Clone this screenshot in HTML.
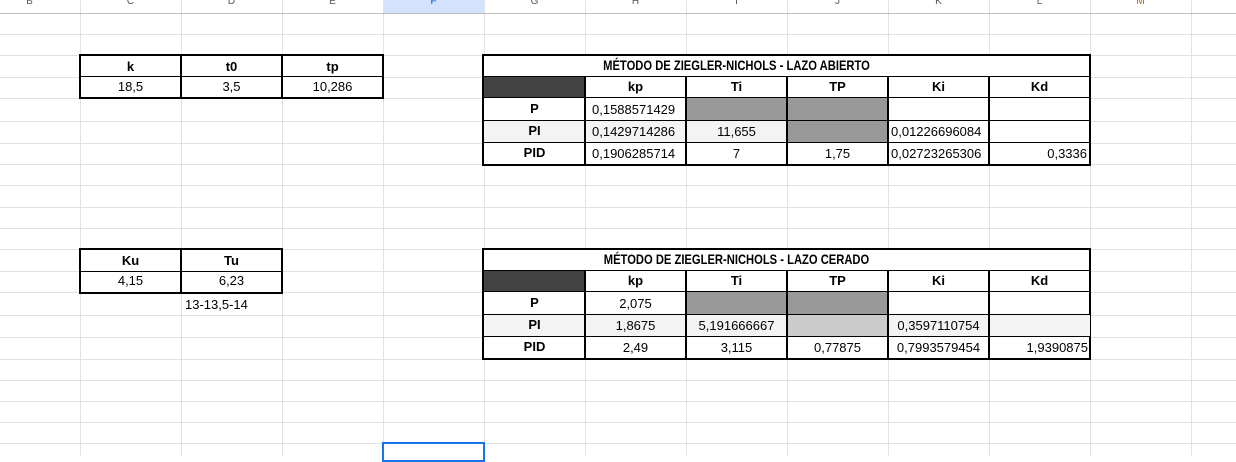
<!DOCTYPE html>
<html><head><meta charset="utf-8"><style>
body{margin:0;width:1236px;height:456px;overflow:hidden;background:#fff;position:relative;font-family:"Liberation Sans",Arial,sans-serif}
div{position:absolute;box-sizing:border-box}
.v{top:0;width:1px;height:456px;background:#e2e2e2}
.h{left:0;width:1236px;height:1px;background:#e2e2e2}
.cl{top:-5px;height:13px;font-size:10px;color:#555;text-align:center;line-height:13px}
.t{font-size:13px;color:#000;text-align:center;white-space:nowrap;overflow:visible}
.b{font-weight:bold}
.k{background:#000}
.ti{font-size:14px;font-weight:bold;transform:scaleX(0.8);transform-origin:center}
</style></head><body>
<div style="left:383px;top:0;width:101px;height:13px;background:#d3e3fd"></div>
<div class="v" style="left:80px"></div><div class="v" style="left:181px"></div><div class="v" style="left:282px"></div><div class="v" style="left:383px"></div><div class="v" style="left:484px"></div><div class="v" style="left:585px"></div><div class="v" style="left:686px"></div><div class="v" style="left:787px"></div><div class="v" style="left:888px"></div><div class="v" style="left:989px"></div><div class="v" style="left:1090px"></div><div class="v" style="left:1191px"></div>
<div class="h" style="top:34px"></div><div class="h" style="top:55px"></div><div class="h" style="top:77px"></div><div class="h" style="top:98px"></div><div class="h" style="top:121px"></div><div class="h" style="top:143px"></div><div class="h" style="top:164px"></div><div class="h" style="top:185px"></div><div class="h" style="top:207px"></div><div class="h" style="top:228px"></div><div class="h" style="top:249px"></div><div class="h" style="top:271px"></div><div class="h" style="top:292px"></div><div class="h" style="top:315px"></div><div class="h" style="top:337px"></div><div class="h" style="top:359px"></div><div class="h" style="top:380px"></div><div class="h" style="top:401px"></div><div class="h" style="top:422px"></div><div class="h" style="top:443px"></div>
<div style="left:0;top:13px;width:1236px;height:1px;background:#c0c0c0"></div>
<div class="cl" style="left:-21px;width:101px">B</div><div class="cl" style="left:80px;width:101px">C</div><div class="cl" style="left:181px;width:101px">D</div><div class="cl" style="left:282px;width:101px">E</div><div class="cl" style="left:383px;width:101px;color:#0b57d0">F</div><div class="cl" style="left:484px;width:101px">G</div><div class="cl" style="left:585px;width:101px">H</div><div class="cl" style="left:686px;width:101px">I</div><div class="cl" style="left:787px;width:101px">J</div><div class="cl" style="left:888px;width:101px">K</div><div class="cl" style="left:989px;width:101px">L</div><div class="cl" style="left:1090px;width:101px;color:#b06000">M</div>

<!-- table k t0 tp -->
<div style="left:79px;top:54px;width:305px;height:45px;background:#fff;border:2px solid #000"></div>
<div class="k" style="left:80px;top:76px;width:303px;height:1px"></div>
<div class="k" style="left:180px;top:55px;width:2px;height:43px"></div>
<div class="k" style="left:281px;top:55px;width:2px;height:43px"></div>
<div class="t b" style="left:80px;top:58px;width:101px;line-height:18px">k</div>
<div class="t b" style="left:181px;top:58px;width:101px;line-height:18px">t0</div>
<div class="t b" style="left:282px;top:58px;width:101px;line-height:18px">tp</div>
<div class="t" style="left:80px;top:78px;width:101px;line-height:18px">18,5</div>
<div class="t" style="left:181px;top:78px;width:101px;line-height:18px">3,5</div>
<div class="t" style="left:282px;top:78px;width:101px;line-height:18px">10,286</div>

<!-- table Ku Tu -->
<div style="left:79px;top:248px;width:204px;height:46px;background:#fff;border:2px solid #000"></div>
<div class="k" style="left:80px;top:271px;width:202px;height:1px"></div>
<div class="k" style="left:180px;top:249px;width:2px;height:44px"></div>
<div class="t b" style="left:80px;top:252px;width:101px;line-height:18px">Ku</div>
<div class="t b" style="left:181px;top:252px;width:101px;line-height:18px">Tu</div>
<div class="t" style="left:80px;top:272px;width:101px;line-height:18px">4,15</div>
<div class="t" style="left:181px;top:272px;width:101px;line-height:18px">6,23</div>
<div class="t" style="left:185px;top:296px;line-height:18px;text-align:left">13-13,5-14</div>

<!-- big table 1 -->
<div style="left:482px;top:54px;width:609px;height:112px;background:#fff;border:2px solid #000"></div>
<div style="left:484px;top:77px;width:101px;height:21px;background:#434343"></div>
<div style="left:484px;top:121px;width:303px;height:22px;background:#f3f3f3"></div>
<div style="left:686px;top:98px;width:202px;height:23px;background:#999"></div>
<div style="left:787px;top:121px;width:101px;height:22px;background:#999"></div>
<div class="k" style="left:484px;top:76px;width:606px;height:1px"></div>
<div class="k" style="left:484px;top:97px;width:606px;height:1px"></div>
<div class="k" style="left:484px;top:120px;width:606px;height:1px"></div>
<div class="k" style="left:484px;top:142px;width:606px;height:1px"></div>
<div class="k" style="left:584px;top:77px;width:2px;height:87px"></div>
<div class="k" style="left:685px;top:77px;width:2px;height:87px"></div>
<div class="k" style="left:786px;top:77px;width:2px;height:87px"></div>
<div class="k" style="left:887px;top:77px;width:2px;height:87px"></div>
<div class="k" style="left:988px;top:77px;width:2px;height:87px"></div>
<div class="t ti" style="left:484px;top:56px;width:505px;line-height:19px">MÉTODO DE ZIEGLER-NICHOLS - LAZO ABIERTO</div>
<div class="t b" style="left:585px;top:78px;width:101px;line-height:18px">kp</div>
<div class="t b" style="left:686px;top:78px;width:101px;line-height:18px">Ti</div>
<div class="t b" style="left:787px;top:78px;width:101px;line-height:18px">TP</div>
<div class="t b" style="left:888px;top:78px;width:101px;line-height:18px">Ki</div>
<div class="t b" style="left:989px;top:78px;width:101px;line-height:18px">Kd</div>
<div class="t b" style="left:484px;top:100px;width:101px;line-height:18px">P</div>
<div class="t b" style="left:484px;top:122px;width:101px;line-height:18px">PI</div>
<div class="t b" style="left:484px;top:144px;width:101px;line-height:18px">PID</div>
<div class="t" style="left:592px;top:101px;line-height:18px">0,1588571429</div>
<div class="t" style="left:592px;top:123px;line-height:18px">0,1429714286</div>
<div class="t" style="left:592px;top:145px;line-height:18px">0,1906285714</div>
<div class="t" style="left:686px;top:123px;width:101px;line-height:18px">11,655</div>
<div class="t" style="left:686px;top:145px;width:101px;line-height:18px">7</div>
<div class="t" style="left:787px;top:145px;width:101px;line-height:18px">1,75</div>
<div class="t" style="left:891px;top:123px;line-height:18px">0,01226696084</div>
<div class="t" style="left:891px;top:145px;line-height:18px">0,02723265306</div>
<div class="t" style="left:989px;top:145px;width:98px;line-height:18px;text-align:right">0,3336</div>

<!-- big table 2 -->
<div style="left:482px;top:248px;width:609px;height:112px;background:#fff;border:2px solid #000"></div>
<div style="left:484px;top:271px;width:101px;height:21px;background:#434343"></div>
<div style="left:484px;top:315px;width:606px;height:22px;background:#f3f3f3"></div>
<div style="left:686px;top:292px;width:202px;height:23px;background:#999"></div>
<div style="left:787px;top:315px;width:101px;height:22px;background:#ccc"></div>
<div class="k" style="left:484px;top:270px;width:606px;height:1px"></div>
<div class="k" style="left:484px;top:291px;width:606px;height:1px"></div>
<div class="k" style="left:484px;top:314px;width:606px;height:1px"></div>
<div class="k" style="left:484px;top:336px;width:606px;height:1px"></div>
<div class="k" style="left:584px;top:271px;width:2px;height:87px"></div>
<div class="k" style="left:685px;top:271px;width:2px;height:87px"></div>
<div class="k" style="left:786px;top:271px;width:2px;height:87px"></div>
<div class="k" style="left:887px;top:271px;width:2px;height:87px"></div>
<div class="k" style="left:988px;top:271px;width:2px;height:87px"></div>
<div class="t ti" style="left:484px;top:250px;width:505px;line-height:19px">MÉTODO DE ZIEGLER-NICHOLS - LAZO CERADO</div>
<div class="t b" style="left:585px;top:272px;width:101px;line-height:18px">kp</div>
<div class="t b" style="left:686px;top:272px;width:101px;line-height:18px">Ti</div>
<div class="t b" style="left:787px;top:272px;width:101px;line-height:18px">TP</div>
<div class="t b" style="left:888px;top:272px;width:101px;line-height:18px">Ki</div>
<div class="t b" style="left:989px;top:272px;width:101px;line-height:18px">Kd</div>
<div class="t b" style="left:484px;top:294px;width:101px;line-height:18px">P</div>
<div class="t b" style="left:484px;top:316px;width:101px;line-height:18px">PI</div>
<div class="t b" style="left:484px;top:338px;width:101px;line-height:18px">PID</div>
<div class="t" style="left:585px;top:295px;width:101px;line-height:18px">2,075</div>
<div class="t" style="left:585px;top:317px;width:101px;line-height:18px">1,8675</div>
<div class="t" style="left:585px;top:339px;width:101px;line-height:18px">2,49</div>
<div class="t" style="left:686px;top:317px;width:101px;line-height:18px">5,191666667</div>
<div class="t" style="left:686px;top:339px;width:101px;line-height:18px">3,115</div>
<div class="t" style="left:787px;top:339px;width:101px;line-height:18px">0,77875</div>
<div class="t" style="left:888px;top:317px;width:101px;line-height:18px">0,3597110754</div>
<div class="t" style="left:888px;top:339px;width:101px;line-height:18px">0,7993579454</div>
<div class="t" style="left:989px;top:339px;width:99px;line-height:18px;text-align:right">1,9390875</div>

<div style="left:382px;top:442px;width:103px;height:20px;border:2px solid #1a73e8"></div>
</body></html>
